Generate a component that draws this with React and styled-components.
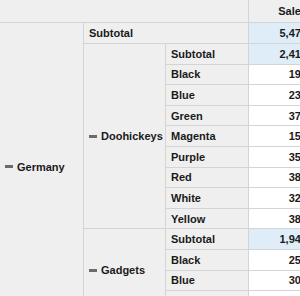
import React from "react";
import styled, { createGlobalStyle } from "styled-components";

const Global = createGlobalStyle`
  html, body {
    margin: 0;
    padding: 0;
    background: #ffffff;
    overflow: hidden;
  }
  body {
    font-family: "Liberation Sans", Arial, Helvetica, sans-serif;
  }
`;

const ROW_H = 20.6;

const Pivot = styled.div`
  display: grid;
  grid-template-columns: 84px 82px 83px 64px;
  grid-template-rows: 23px 21px repeat(13, ${ROW_H}px);
  width: 313px;
  font-size: 11px;
  font-weight: 700;
  color: #1a1a1a;
`;

const Cell = styled.div`
  box-sizing: border-box;
  display: flex;
  align-items: center;
  justify-content: ${(p) => (p.$num ? "flex-end" : "flex-start")};
  padding: ${(p) => (p.$num ? "0 5px 0 0" : "0 0 0 5px")};
  background: ${(p) =>
    p.$tone === "total" ? "#deedf7" : p.$tone === "value" ? "#ffffff" : "#efefef"};
  border-right: 1px solid #d4d4d4;
  border-bottom: 1px solid #d4d4d4;
  white-space: nowrap;
  overflow: hidden;
  grid-column: ${(p) => p.$col || "auto"};
  grid-row: ${(p) => p.$row || "auto"};
`;

const Collapse = styled.span`
  display: inline-block;
  width: 8px;
  height: 3px;
  background: #6b6b6b;
  margin-right: 4px;
  flex-shrink: 0;
`;

const doohickeys = [
  ["Black", "193"],
  ["Blue", "234"],
  ["Green", "376"],
  ["Magenta", "153"],
  ["Purple", "357"],
  ["Red", "382"],
  ["White", "324"],
  ["Yellow", "385"],
];

const gadgets = [
  ["Black", "252"],
  ["Blue", "304"],
  ["Green", "287"],
];

export default function App() {
  return (
    <>
      <Global />
      <Pivot>
        <Cell $col="1 / span 3" $row="1" />
        <Cell $col="4" $row="1" $num>
          Sales
        </Cell>

        <Cell $col="1" $row="2 / span 14">
          <Collapse />
          Germany
        </Cell>
        <Cell $col="2 / span 2" $row="2">
          Subtotal
        </Cell>
        <Cell $col="4" $row="2" $num $tone="total">
          5,474
        </Cell>

        <Cell $col="2" $row="3 / span 9">
          <Collapse />
          Doohickeys
        </Cell>
        <Cell $col="3" $row="3">
          Subtotal
        </Cell>
        <Cell $col="4" $row="3" $num $tone="total">
          2,414
        </Cell>
        {doohickeys.map(([name, value], i) => (
          <React.Fragment key={"d" + name}>
            <Cell $col="3" $row={String(4 + i)}>
              {name}
            </Cell>
            <Cell $col="4" $row={String(4 + i)} $num $tone="value">
              {value}
            </Cell>
          </React.Fragment>
        ))}

        <Cell $col="2" $row="12 / span 4">
          <Collapse />
          Gadgets
        </Cell>
        <Cell $col="3" $row="12">
          Subtotal
        </Cell>
        <Cell $col="4" $row="12" $num $tone="total">
          1,943
        </Cell>
        {gadgets.map(([name, value], i) => (
          <React.Fragment key={"g" + name}>
            <Cell $col="3" $row={String(13 + i)}>
              {name}
            </Cell>
            <Cell $col="4" $row={String(13 + i)} $num $tone="value">
              {value}
            </Cell>
          </React.Fragment>
        ))}
      </Pivot>
    </>
  );
}
